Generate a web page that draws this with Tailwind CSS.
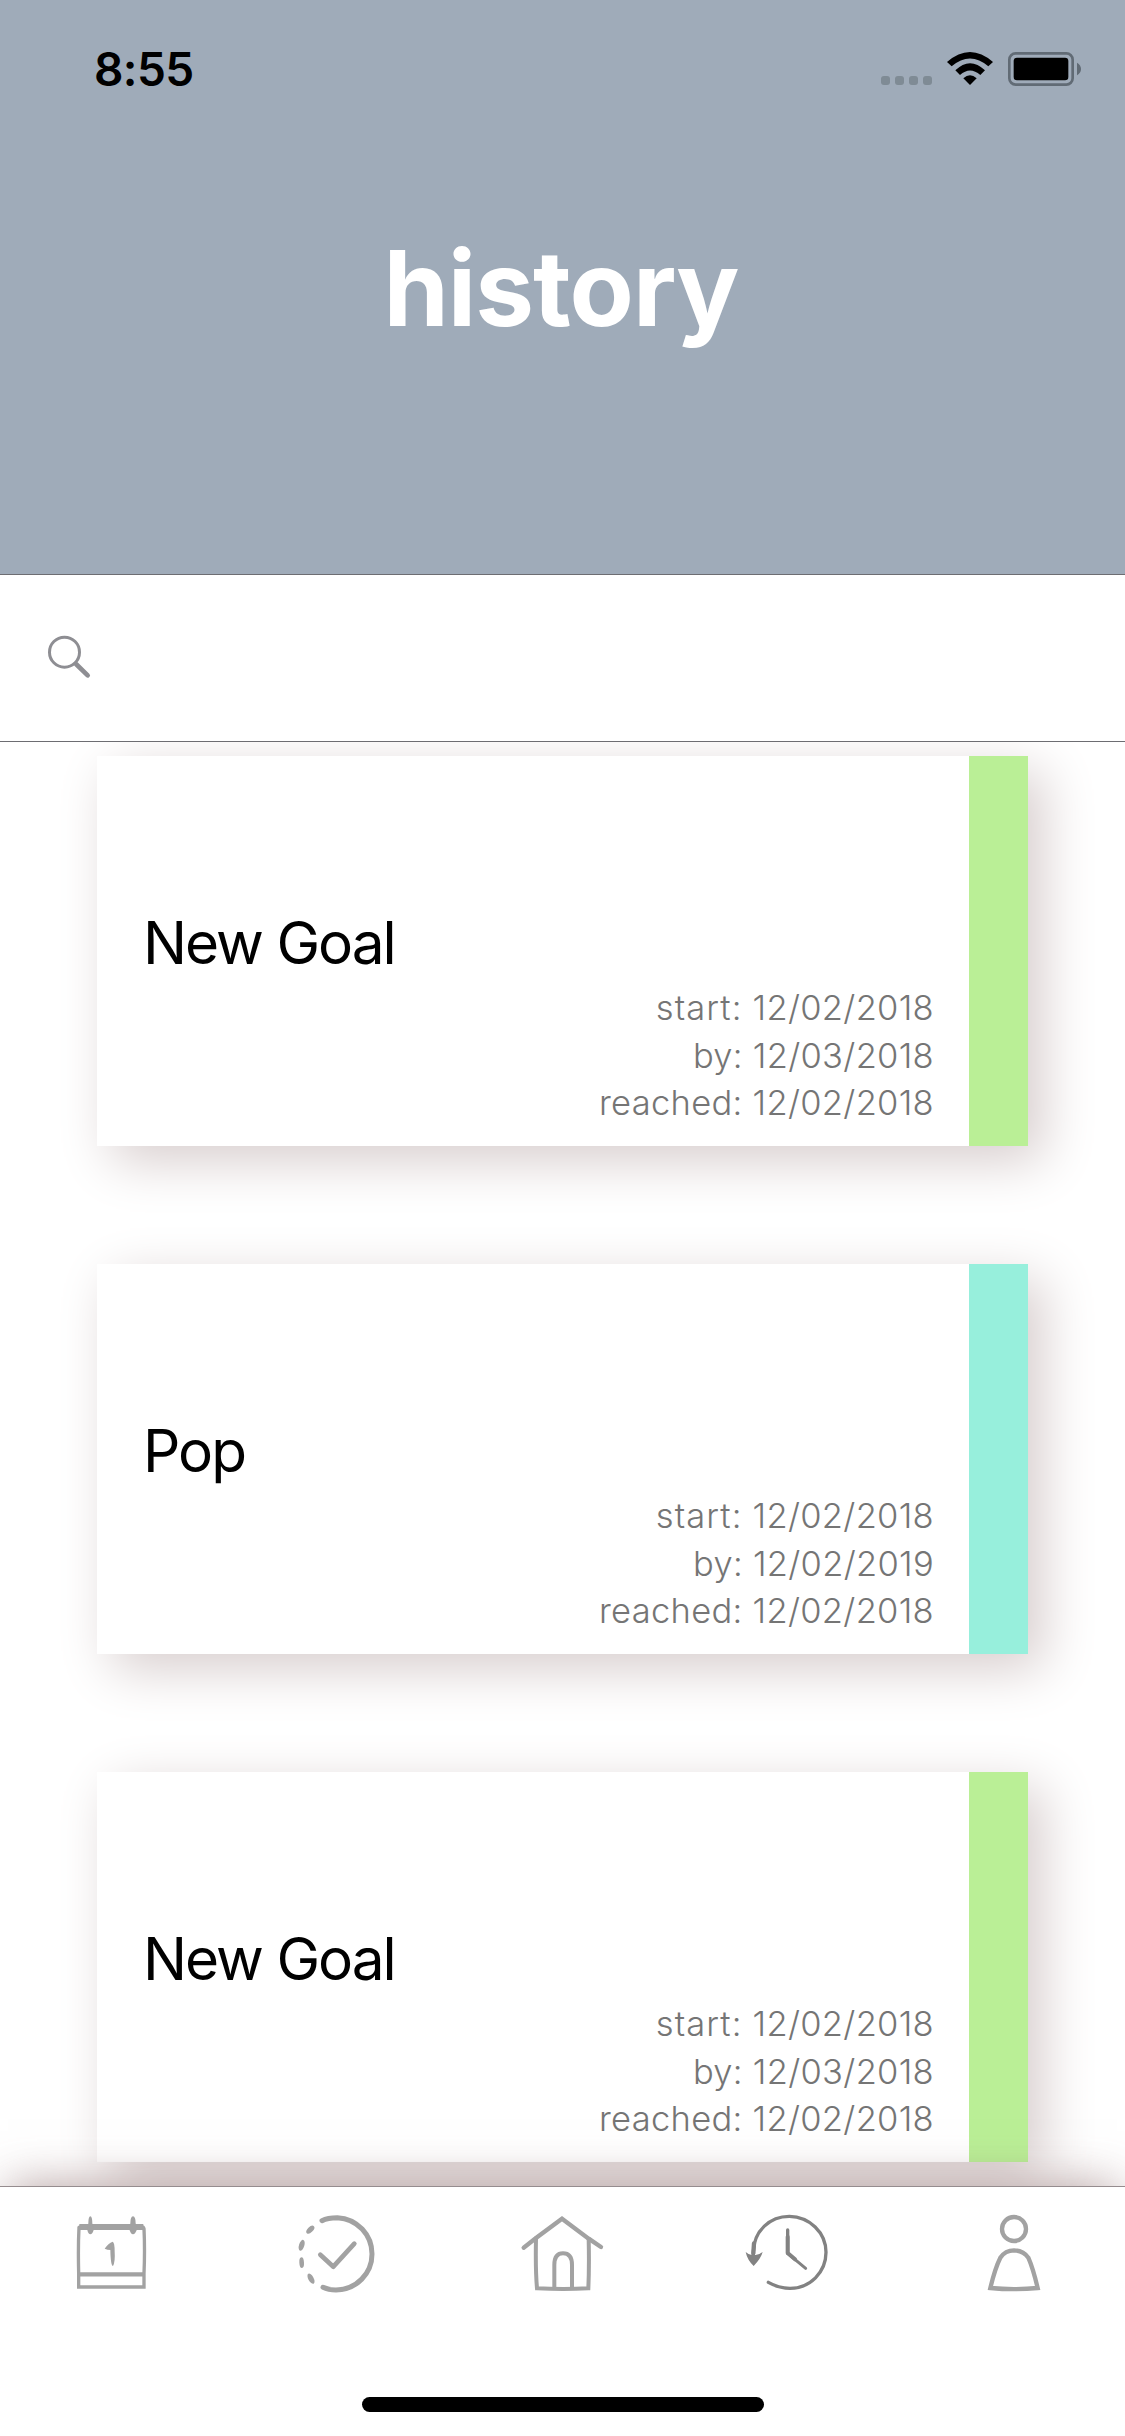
<!DOCTYPE html>
<html lang="en">
<head>
<meta charset="utf-8">
<title>history</title>
<script src="https://cdn.jsdelivr.net/npm/@tailwindcss/browser@4"></script>
</head>
<body class="bg-white">
<div class="flex h-[2436px] w-[1125px] flex-col overflow-hidden bg-white font-['Inter',sans-serif]">
  <header class="flex h-[575px] shrink-0 flex-col border-b border-[#6d6d72] bg-[#9fabb9]">
    <div class="flex h-[132px] items-center justify-between pt-[6px] pl-[94px] pr-[43px]">
      <span class="text-[46px] leading-none font-semibold tracking-[-0.6px] text-black">8:55</span>
      <svg class="h-[80px] w-[203px]" viewBox="57 -3 609 240">
        <g fill="#7f8b95"><rect x="63" y="138" width="27" height="27" rx="9"/><rect x="105" y="138" width="27" height="27" rx="9"/><rect x="147" y="138" width="27" height="27" rx="9"/><rect x="189" y="138" width="27" height="27" rx="9"/></g>
        <path d="M330 165L310 145Q330 127 350 145Z"/>
        <path d="M286 121Q330 78 375 121L361 135Q330 108 300 135Z"/>
        <path d="M261 96Q330 36 399 96L385 109Q330 62 275 109Z"/>
        <rect x="448" y="70" width="190" height="94" rx="19" fill="none" stroke="#616b75" stroke-width="8"/>
        <rect x="461" y="83" width="164" height="68" rx="10"/>
        <path d="M651 98Q663 105 663 117Q663 129 651 136Z" fill="#616b75"/>
      </svg>
    </div>
    <h1 class="pt-[106px] pr-[3px] text-center text-[105px] leading-[100px] font-bold tracking-[-1px] text-white">history</h1>
  </header>

  <div class="relative z-10 flex h-[167px] shrink-0 items-center border-b border-[#6d6d72] bg-white pb-[2px] pl-[47px]">
    <svg class="h-[44px] w-[44px]" viewBox="0 0 132 132" fill="none" stroke="#8e8e93" stroke-linecap="round"><circle cx="52.500" cy="51.500" r="45" stroke-width="9"/><path d="M87 87L122 121" stroke-width="14"/></svg>
  </div>

  <main class="flex min-h-0 flex-1 flex-col gap-[118px] overflow-hidden pt-[14px] pl-[97px]">
    <article class="flex h-[390px] w-[931px] shrink-0 bg-white shadow-[15px_15px_50px_rgb(215,205,205)]">
      <div class="flex flex-1 flex-col pt-[151px] pr-[35px] pl-[46px]">
        <h2 class="text-[58.500px] leading-[72px] tracking-[-2px] text-black">New Goal</h2>
        <div class="pt-[5px] text-right text-[34.500px] leading-[47.670px] font-light tracking-[0.3px] text-[#757575]"><p><span class="tracking-[1.1px]">start:</span> 12/02/2018</p><p>by: 12/03/2018</p><p>reached: 12/02/2018</p></div>
      </div>
      <div class="w-[59px] bg-[#baef96]"></div>
    </article>
    <article class="flex h-[390px] w-[931px] shrink-0 bg-white shadow-[15px_15px_50px_rgb(215,205,205)]">
      <div class="flex flex-1 flex-col pt-[151px] pr-[35px] pl-[46px]">
        <h2 class="text-[58.500px] leading-[72px] tracking-[-2px] text-black">Pop</h2>
        <div class="pt-[5px] text-right text-[34.500px] leading-[47.670px] font-light tracking-[0.3px] text-[#757575]"><p><span class="tracking-[1.1px]">start:</span> 12/02/2018</p><p>by: 12/02/2019</p><p>reached: 12/02/2018</p></div>
      </div>
      <div class="w-[59px] bg-[#97efdc]"></div>
    </article>
    <article class="flex h-[390px] w-[931px] shrink-0 bg-white shadow-[15px_15px_50px_rgb(215,205,205)]">
      <div class="flex flex-1 flex-col pt-[151px] pr-[35px] pl-[46px]">
        <h2 class="text-[58.500px] leading-[72px] tracking-[-2px] text-black">New Goal</h2>
        <div class="pt-[5px] text-right text-[34.500px] leading-[47.670px] font-light tracking-[0.3px] text-[#757575]"><p><span class="tracking-[1.1px]">start:</span> 12/02/2018</p><p>by: 12/03/2018</p><p>reached: 12/02/2018</p></div>
      </div>
      <div class="w-[59px] bg-[#baef96]"></div>
    </article>
  </main>

  <nav class="relative z-10 flex h-[250px] shrink-0 flex-col items-center border-t border-[#958c8e] bg-white pt-[3px] shadow-[0_-8px_45px_-8px_rgba(130,95,95,0.6)]">
    <div class="grid w-full grid-cols-5 justify-items-center">
      <svg class="h-[120px] w-[120px]" viewBox="9 0 360 360" fill="none" stroke="#a2a2a2">
        <path d="M86 291V250Q84 170 87 112Q88 110 95 110H273Q281 110 282 116Q285 180 282 250V291Z" stroke-width="10"/>
        <path d="M88 111H280" stroke-width="18"/><path d="M88 253H280" stroke-width="13"/>
        <g fill="#a2a2a2" stroke="none"><path d="M121 79Q127 80 127 100L131 120Q127 133 121 133Q115 133 112 120L115 100Q115 80 121 79Z"/><path d="M249 79Q257 80 257 100L261 118Q256 133 249 133Q242 133 238 118L241 100Q241 80 249 79Z"/><path d="M188 155Q194 157 194 185Q196 215 189 228Q182 228 181 180Q172 180 164 176Q175 160 188 155Z"/></g>
      </svg>
      <svg class="h-[120px] w-[120px]" viewBox="-6 0 360 360" fill="none" stroke="#a2a2a2" stroke-linecap="round" stroke-linejoin="round">
        <path d="M126 92C143 83 155 83 172 83C232 86 276 135 276 192C276 250 230 299 168 300Q145 300 129 292" stroke-width="15"/>
        <path d="M121 194L160 230L223 161" stroke-width="14"/>
        <g fill="#a2a2a2" stroke="none"><ellipse cx="91" cy="119" rx="15" ry="8" transform="rotate(-45 91 119)"/><ellipse cx="65" cy="166" rx="17" ry="8" transform="rotate(-73 65 166)"/><ellipse cx="65" cy="218" rx="16" ry="7" transform="rotate(87 65 218)"/><ellipse cx="93" cy="266" rx="17" ry="8" transform="rotate(62 93 266)"/></g>
      </svg>
      <svg class="h-[120px] w-[120px]" viewBox="8 0 360 360" fill="none" stroke="#a2a2a2" stroke-linecap="round">
        <path d="M70 173L106 145L185 86L265 146L302 171" stroke-width="13"/>
        <path d="M107 145Q105 240 110 295Q190 299 264 295Q267 230 265 146" stroke-width="12"/>
        <path d="M162 292V225Q162 190 188 190Q215 190 215 225V292" stroke-width="12"/>
      </svg>
      <svg class="h-[120px] w-[120px]" viewBox="-6 0 360 360" fill="none" stroke="#828282" stroke-linecap="round" stroke-linejoin="round">
        <path d="M70 205V185C72 122 120 79 178 79C238 80 288 127 288 187C288 247 240 295 180 295Q145 294 115 277" stroke-width="10"/>
        <path d="M72 160L70 190" stroke-width="13"/>
        <path d="M47 186Q60 198 71 194Q82 198 98 186Q93 205 71 228Q52 210 47 186Z" fill="#828282" stroke="none"/>
        <path d="M173 120V190" stroke-width="10"/><path d="M173 190L227 235" stroke-width="9"/><path d="M173 140V189L195 208" stroke-width="12"/>
      </svg>
      <svg class="h-[120px] w-[120px]" viewBox="-21 0 360 360" fill="none" stroke="#a2a2a2">
        <circle cx="162" cy="117" r="36" stroke-width="13"/>
        <path d="M91 294Q105 235 121 203Q136 181 162 181Q190 182 205 203Q219 235 233 294Q162 301 91 294Z" stroke-width="13"/>
      </svg>
    </div>
    <div class="mt-[87px] h-[15px] w-[402px] rounded-full bg-black"></div>
  </nav>
</div>
</body>
</html>
